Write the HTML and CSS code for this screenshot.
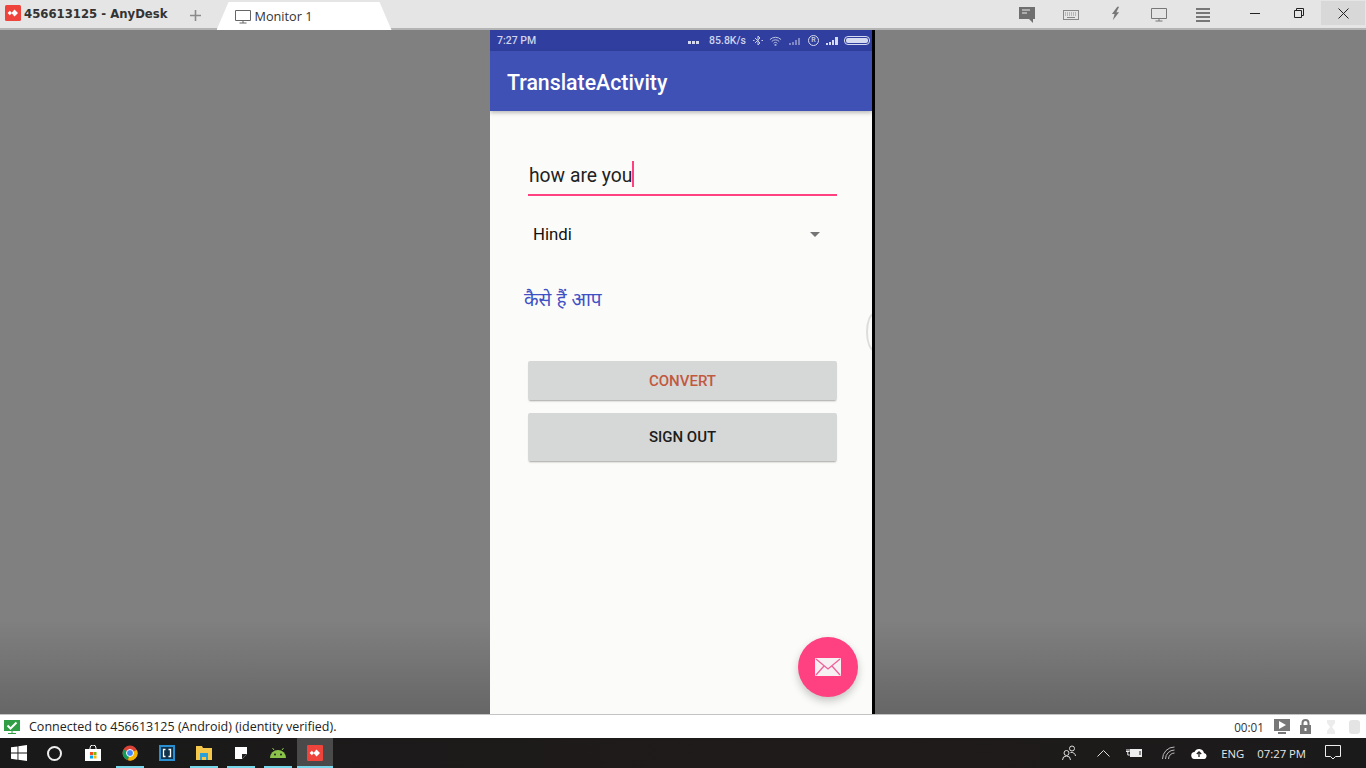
FILE: index.html
```html
<!DOCTYPE html>
<html lang="en">
<head>
<meta charset="utf-8">
<title>456613125 - AnyDesk</title>
<link rel="stylesheet" href="styles.css">
</head>
<body>
<div class="app">
  <header class="titlebar">
    <div class="brand">
      <svg class="ad-logo" viewBox="0 0 16 16"><rect width="16" height="16" rx="1.500" fill="#ef443b"/><path d="M4.800 5.800L7 8l-2.200 2.200L2.600 8z M9.500 4.500L13 8l-3.500 3.500L6.500 8z" fill="#fff"/></svg>
      <span class="brand-text">456613125 - AnyDesk</span>
    </div>
    <svg class="plus" viewBox="0 0 11 11"><path d="M5.500 0v11M0 5.500h11" stroke="#8a8a8a" stroke-width="1.600"/></svg>
    <div class="tab">
      <svg class="tab-icon" viewBox="0 0 16 14"><path d="M.5.500h15v10H.5z" fill="none" stroke="#666"/><path d="M8 11v2M4.500 13h7" stroke="#666"/></svg>
      <span>Monitor 1</span>
    </div>
    <div class="tools">
      <svg class="tool t-chat" viewBox="0 0 16 17"><path d="M0 0h16v12h-2v4l-4-4H0z" fill="#6f6f6f"/><path d="M3 3h8M3 6h5" stroke="#eee" stroke-width="1.200"/></svg>
      <svg class="tool t-key" viewBox="0 0 16 10"><rect x=".5" y=".5" width="15" height="9" fill="none" stroke="#888"/><path d="M2 3h12M2 5h12" stroke="#888" stroke-dasharray="1 1"/><path d="M4 7.500h8" stroke="#888"/></svg>
      <svg class="tool t-bolt" viewBox="0 0 10 16"><path d="M7 0L1 8h3L2 15l7-9H6l3-6z" fill="#777"/></svg>
      <svg class="tool t-mon" viewBox="0 0 16 14"><path d="M.5.500h15v10H.5z" fill="none" stroke="#777"/><path d="M8 11v2M4.500 13h7" stroke="#777"/></svg>
      <svg class="tool t-menu" viewBox="0 0 14 14"><path d="M0 1h14M0 5h14M0 9h14M0 13h14" stroke="#777" stroke-width="2"/></svg>
    </div>
    <div class="winctl">
      <div class="wbtn"><svg width="10" height="10" viewBox="0 0 10 10"><path d="M0 5.500h10" stroke="#222"/></svg></div>
      <div class="wbtn"><svg width="10" height="10" viewBox="0 0 10 10"><path d="M.5 2.500h7v7h-7zM2.500 2.500v-2h7v7h-2" fill="none" stroke="#222"/></svg></div>
      <div class="wbtn wclose"><svg width="11" height="11" viewBox="0 0 11 11"><path d="M.5.500l10 10M10.500.500l-10 10" stroke="#222"/></svg></div>
    </div>
  </header>

  <main class="viewer">
    <div class="phone">
      <div class="android-status">
        <span>7:27 PM</span>
        <div class="status-right">
          <svg class="st-dots" viewBox="0 0 11 3"><path d="M0 0h3v3H0zM4 0h3v3H4zM8 0h3v3H8z" fill="#d6daf0"/></svg>
          <span>85.8K/s</span>
          <svg class="st-bt" viewBox="0 0 10 11"><path d="M2 3l5 5-2 2V1l2 2-5 5" fill="none" stroke="#c6cbe8"/><path d="M0 5.500h1.500M8.500 5.500H10" stroke="#c6cbe8"/></svg>
          <svg class="st-wifi" viewBox="0 0 14 10"><path d="M1 3.500a8.500 8.500 0 0 1 12 0M3 5.500a5.500 5.500 0 0 1 8 0M5 7.500a2.500 2.500 0 0 1 4 0" fill="none" stroke="#c6cbe8"/><path d="M6 8.500h2v1.500H6z" fill="#c6cbe8"/></svg>
          <svg class="st-sig dim" viewBox="0 0 13 8"><path d="M0 6h2v2H0zM3 5h2v3H3zM6 3h2v5H6zM9 1h2v7H9z" fill="#7f88c4"/></svg>
          <span class="st-r">R</span>
          <svg class="st-sig" viewBox="0 0 13 8"><path d="M0 6h2v2H0zM3 5h2v3H3zM6 3h2v5H6zM9 0h3v8H9z" fill="#d6daf0"/></svg>
          <span class="battery"><span class="battery-fill"></span></span>
        </div>
      </div>
      <div class="appbar">TranslateActivity</div>
      <div class="content">
        <div class="field"><span class="field-text">how are you</span><span class="caret"></span></div>
        <div class="spinner">
          <span>Hindi</span>
          <span class="arrow"></span>
        </div>
        <div class="result">कैसे हैं आप</div>
        <button class="btn btn-convert">CONVERT</button>
        <button class="btn btn-signout">SIGN OUT</button>
      </div>
      <div class="edge-handle"></div>
      <div class="fab">
        <svg width="26" height="18" viewBox="0 0 26 18"><rect width="26" height="18" rx="1" fill="#f7f0f3"/><path d="M1 1l12 10L25 1M1 17l8-9M25 17l-8-9" fill="none" stroke="#f0609a" stroke-width="1.300"/></svg>
      </div>
    </div>
    <div class="phone-edge"></div>
  </main>

  <div class="statusline">
    <svg class="verified" viewBox="0 0 16 14"><rect width="16" height="11" fill="#2f9e44"/><path d="M3.500 5.500l3 3 6-6" fill="none" stroke="#fff" stroke-width="2"/><path d="M8 11v2M4 13.500h8" stroke="#2f9e44"/></svg>
    <span class="conn-text">Connected to 456613125 (Android) (identity verified).</span>
    <div class="status-tools">
      <span class="timer">00:01</span>
      <svg class="si si-play" viewBox="0 0 16 15"><rect width="16" height="12" fill="#777"/><path d="M5 2l7 4-7 4z" fill="#fff"/><path d="M4 14h8" stroke="#777" stroke-width="2"/></svg>
      <svg class="si si-lock" viewBox="0 0 11 15"><path d="M2.500 6V4a3 3 0 0 1 6 0v2" fill="none" stroke="#777" stroke-width="2"/><rect y="6" width="11" height="9" fill="#777"/><rect x="4.500" y="9" width="2" height="3" fill="#fff"/></svg>
      <svg class="si si-hour" viewBox="0 0 8 14"><path d="M0 0h8v3L5 7l3 4v3H0v-3l3-4-3-4z" fill="#ececec"/></svg>
      <svg class="si si-db" viewBox="0 0 11 14"><rect width="11" height="14" rx="3" fill="#e4e4e4"/></svg>
    </div>
  </div>

  <footer class="taskbar">
    <div class="task-left">
      <div class="tb-item tb-start"><svg width="16" height="16" viewBox="0 0 16 16"><path d="M0 2.300l6.500-.9v6.200H0zM7.400 1.300L16 0v7.600H7.400zM0 8.500h6.500v6.200L0 13.800zM7.400 8.500H16V16l-8.600-1.200z" fill="#fff"/></svg></div>
      <div class="tb-item"><span class="cortana"></span></div>
      <div class="tb-item"><svg width="16" height="16" viewBox="0 0 16 16"><path d="M5 4V3a3 3 0 0 1 6 0v1" fill="none" stroke="#fff"/><rect y="4" width="16" height="12" fill="#fff"/><rect x="5" y="7" width="3" height="3" fill="#f25022"/><rect x="8.500" y="7" width="3" height="3" fill="#7fba00"/><rect x="5" y="10.500" width="3" height="3" fill="#00a4ef"/><rect x="8.500" y="10.500" width="3" height="3" fill="#ffb900"/></svg></div>
      <div class="tb-item on"><svg width="16" height="16" viewBox="0 0 16 16"><circle cx="8" cy="8" r="7.500" fill="#db4437"/><path d="M8 8L1.500 4.500A7.500 7.500 0 0 0 6 15.300z" fill="#0f9d58"/><path d="M8 8l6.900-3A7.500 7.500 0 0 1 6 15.300z" fill="#f4b400"/><circle cx="8" cy="8" r="3.500" fill="#4285f4" stroke="#fff"/></svg></div>
      <div class="tb-item"><svg width="16" height="16" viewBox="0 0 16 16"><rect width="16" height="16" fill="#2a8fd0"/><rect x="2" y="2" width="12" height="12" fill="#10334d"/><path d="M6.500 4.500h-2v7h2M9.500 4.500h2v7h-2" fill="none" stroke="#fff" stroke-width="1.300"/></svg></div>
      <div class="tb-item on"><svg width="16" height="14" viewBox="0 0 16 14"><path d="M0 0h6l1 2h9v12H0z" fill="#f5c84c"/><path d="M4 7h8v7h-2v-3H6v3H4z" fill="#2b9fd8"/></svg></div>
      <div class="tb-item on"><svg width="12" height="12" viewBox="0 0 12 12"><path d="M0 0h12v7l-5 5H0z" fill="#fff"/><path d="M7 12V7h5z" fill="#222"/></svg></div>
      <div class="tb-item on"><svg width="16" height="10" viewBox="0 0 16 10"><path d="M4 2L2.500 0M12 2l1.500-2" stroke="#8bc34a"/><path d="M0 10a8 8 0 0 1 16 0z" fill="#8bc34a"/><circle cx="5" cy="6.500" r="1" fill="#222"/><circle cx="11" cy="6.500" r="1" fill="#222"/></svg></div>
      <div class="tb-item on active"><svg width="16" height="16" viewBox="0 0 16 16"><rect width="16" height="16" rx="1" fill="#ef443b"/><path d="M4.800 5.800L7 8l-2.200 2.200L2.600 8z M9.500 4.500L13 8l-3.500 3.500L6.500 8z" fill="#fff"/></svg></div>
    </div>
    <div class="tray">
      <svg class="tr tr-people" viewBox="0 0 14 16"><circle cx="4.500" cy="8" r="2.500" fill="none" stroke="#ddd"/><circle cx="10" cy="3.500" r="2.500" fill="none" stroke="#ddd"/><path d="M.5 15a4 4 0 0 1 8 0M8.500 7.500a4 4 0 0 1 5 3.500" fill="none" stroke="#ddd"/></svg>
      <svg class="tr tr-up" viewBox="0 0 13 7"><path d="M.5 6.500l6-6 6 6" fill="none" stroke="#ddd"/></svg>
      <svg class="tr tr-batt" viewBox="0 0 16 10"><path d="M0 3.500h3.500M1 1v2.500M3 1v2.500M1.800 4v3h2" fill="none" stroke="#eee"/><rect x="4.500" y="1.500" width="11" height="7" fill="#eee" stroke="#eee"/><rect x="13.500" y="3" width="1" height="4" fill="#222"/></svg>
      <svg class="tr tr-wifi" viewBox="0 0 13 14"><path d="M.5 13A12 12 0 0 1 12.500 1M3.500 13a9 9 0 0 1 9-9M6.500 13a6 6 0 0 1 6-6" fill="none" stroke="#bbb"/></svg>
      <svg class="tr tr-cloud" viewBox="0 0 16 11"><path d="M4 11a3.500 3.500 0 0 1-.5-7 5 5 0 0 1 9.500 1 3 3 0 0 1-1 6z" fill="#fff"/><path d="M8 9V4M5.800 6L8 3.800 10.200 6" fill="none" stroke="#222" stroke-width="1.300"/></svg>
      <span class="tr-lang">ENG</span>
      <span class="tr-time">07:27 PM</span>
      <svg class="tr tr-note" viewBox="0 0 16 16"><path d="M.5.500h15v11h-5L8 14l-2.500-2.500h-5z" fill="none" stroke="#eee"/></svg>
    </div>
  </footer>
</div>
</body>
</html>
```
FILE: styles.css
```css
* { box-sizing: border-box; }
html, body { margin: 0; height: 100%; }
body { font-family: "Open Sans", "Liberation Sans", sans-serif; overflow: hidden; }
.app { width: 1366px; height: 768px; display: flex; flex-direction: column; }

.titlebar { height: 30px; flex: none; background: #e5e5e5; border-bottom: 2px solid #b4b4b4; display: flex; align-items: flex-start; }
.brand { display: flex; flex: none; align-items: center; gap: 3px; margin: 5px 0 0 5px; height: 16px; }
.ad-logo { width: 16px; height: 16px; }
.brand-text { font-family: "DejaVu Sans", sans-serif; font-weight: 700; font-size: 11.700px; color: #333; white-space: nowrap; padding-top: 2px; }
.plus { width: 11px; height: 11px; flex: none; margin: 10px 0 0 22px; }
.tab { width: 175px; height: 28px; flex: none; margin: 2px 0 0 16px; padding-left: 18px; background: #fff; clip-path: polygon(12px 0, 163px 0, 175px 100%, 0 100%); display: flex; align-items: center; gap: 4px; font-size: 12.700px; color: #333; }
.tab-icon { width: 16px; height: 14px; margin-top: 1px; }
.tools { margin-left: auto; display: flex; flex: none; }
.tool { display: block; }
.t-chat { width: 16px; height: 17px; margin: 7px 0 0 0; }
.t-key { width: 16px; height: 10px; margin: 10px 0 0 28px; }
.t-bolt { width: 9px; height: 16px; margin: 6px 0 0 32px; }
.t-mon { width: 16px; height: 14px; margin: 8px 0 0 31px; }
.t-menu { width: 14px; height: 14px; margin: 8px 0 0 29px; }
.winctl { margin-left: 23px; margin-right: 1px; display: flex; flex: none; }
.wbtn { width: 44px; height: 24px; margin-top: 1px; display: flex; align-items: center; justify-content: center; }
.wclose { background: #d8d8d8; }

.viewer { flex: 1; min-height: 0; background: linear-gradient(#808080 0, #808080 590px, #666 684px); display: flex; padding-left: 490px; position: relative; }
.phone { width: 382px; height: 100%; background: #fbfbf9; display: flex; flex-direction: column; position: relative; overflow: hidden; }
.phone-edge { width: 3px; background: #000; }
.android-status { height: 21px; flex: none; background: #303f9f; display: flex; align-items: center; justify-content: space-between; padding: 0 2px 0 7px; font-family: Roboto, sans-serif; font-weight: 500; font-size: 10.500px; color: #cfd3ee; }
.status-right { display: flex; align-items: center; }
.st-dots { width: 11px; height: 3px; margin: 3px 10px 0 0; }
.st-bt { width: 10px; height: 11px; margin-left: 7px; }
.st-wifi { width: 13px; height: 10px; margin-left: 6px; }
.st-sig { width: 13px; height: 8px; margin-left: 7px; }
.st-r { width: 11px; height: 11px; border: 1px solid #d6daf0; border-radius: 50%; font-size: 7px; line-height: 9px; text-align: center; margin-left: 6px; }
.battery { width: 26px; height: 9px; margin-left: 5px; border: 1px solid #d6daf0; border-radius: 4px; padding: 1px; display: flex; }
.battery-fill { flex: 1; background: #d6daf0; border-radius: 2px; }
.appbar { height: 60px; flex: none; background: #3f51b5; color: #fff; font-family: Roboto, sans-serif; font-weight: 500; font-size: 21.300px; padding: 2px 0 0 17px; display: flex; align-items: center; box-shadow: 0 2px 4px rgba(0,0,0,.25); position: relative; }
.content { flex: 1; padding: 48px 35px 0 38px; font-family: Roboto, sans-serif; }
.field { height: 37px; border-bottom: 2px solid #ff4081; font-size: 19.300px; color: #222; display: flex; align-items: flex-start; padding: 2px 0 0 1px; line-height: 30px; }
.caret { width: 2px; height: 26px; background: #ff4081; }
.spinner { height: 38px; margin-top: 19px; padding: 0 17px 0 5px; display: flex; align-items: center; justify-content: space-between; font-size: 16.800px; color: #111; }
.arrow { width: 0; height: 0; border-left: 5px solid transparent; border-right: 5px solid transparent; border-top: 5px solid #757575; }
.result { margin: 30px 0 0 -4px; height: 32px; line-height: 32px; font-family: "Noto Sans", "DejaVu Sans", sans-serif; font-size: 19px; color: #3f51c5; }
.btn { display: block; width: 100%; border: 0; padding: 0; background: #d6d7d7; border-radius: 2px; font-family: Roboto, sans-serif; font-weight: 500; font-size: 15px; box-shadow: 0 2px 2px -1px rgba(0,0,0,.35); }
.btn-convert { height: 39px; margin-top: 46px; color: #c1593f; }
.btn-signout { height: 48px; margin-top: 13px; color: #1c1c1c; }
.edge-handle { position: absolute; right: -10px; top: 283px; width: 16px; height: 38px; border: 2px solid #ddd; border-radius: 50%; }
.fab { position: absolute; left: 308px; top: 607px; width: 60px; height: 60px; border-radius: 50%; background: #ff4081; box-shadow: 0 4px 8px rgba(0,0,0,.22); display: flex; align-items: center; justify-content: center; }

.statusline { height: 24px; flex: none; background: #fff; border-top: 1px solid #c4c4c4; display: flex; align-items: center; padding-left: 4px; font-size: 12.500px; color: #222; }
.verified { width: 16px; height: 14px; }
.conn-text { margin-left: 9px; }
.status-tools { margin-left: auto; display: flex; align-items: center; }
.timer { color: #333; font-size: 11.700px; }
.si { display: block; }
.si-play { width: 16px; height: 15px; margin-left: 10px; }
.si-lock { width: 11px; height: 15px; margin-left: 10px; }
.si-hour { width: 8px; height: 14px; margin-left: 16px; }
.si-db { width: 11px; height: 14px; margin: 0 6px 0 14px; }

.taskbar { height: 30px; flex: none; background: linear-gradient(90deg, #191919, #1f1b1a 60%, #1b1a1a); display: flex; justify-content: space-between; }
.task-left { display: flex; }
.tb-item { width: 37px; height: 30px; display: flex; align-items: center; justify-content: center; position: relative; }
.tb-item.on::after { content: ""; position: absolute; left: 5px; right: 4px; bottom: 0; height: 2px; background: #76d7ea; }
.tb-item.active { background: #4a4a4a; width: 36px; margin-left: 1px; }
.tb-item.active::after { left: 0; right: 0; }
.cortana { width: 15px; height: 15px; margin-right: 2px; border: 2px solid #eee; border-radius: 50%; }
.tray { display: flex; align-items: center; color: #e8e8e8; font-size: 11.300px; }
.tr { display: block; }
.tr-people { width: 14px; height: 16px; }
.tr-up { width: 13px; height: 7px; margin-left: 21px; }
.tr-batt { width: 16px; height: 10px; margin-left: 16px; }
.tr-wifi { width: 13px; height: 14px; margin-left: 20px; }
.tr-cloud { width: 16px; height: 11px; margin-left: 16px; }
.tr-lang { margin-left: 14px; }
.tr-time { margin-left: 13px; }
.tr-note { width: 16px; height: 16px; margin: 0 25px 0 19px; }
```
